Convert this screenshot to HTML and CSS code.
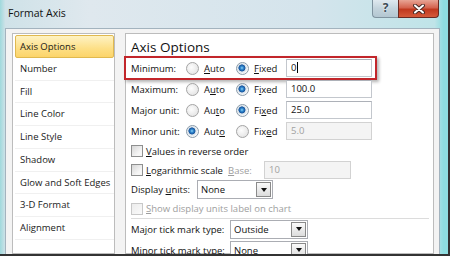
FILE: index.html
```html
<!DOCTYPE html>
<html lang="en">
<head>
    <meta charset="UTF-8">
    <meta name="viewport" content="width=device-width, initial-scale=1.0">
    <title>Format Axis</title>
    <link rel="stylesheet" href="styles.css">
</head>
<body>
    <div class="window">
        <div class="titlebar">
            <span class="title">Format Axis</span>
            <div class="caption">
                <span class="btn-help">?</span>
                <span class="btn-close">
                    <svg width="12" height="10" viewBox="0 0 12 10">
                        <path d="M2 1.5 L10 8.5 M10 1.5 L2 8.5" stroke="#4a2a26" stroke-width="4" stroke-linecap="round"/>
                        <path d="M2 1.5 L10 8.5 M10 1.5 L2 8.5" stroke="#fff" stroke-width="2" stroke-linecap="round"/>
                    </svg>
                </span>
            </div>
        </div>
        <div class="body">
            <ul class="nav">
                <li class="active">Axis Options</li>
                <li>Number</li>
                <li>Fill</li>
                <li>Line Color</li>
                <li>Line Style</li>
                <li>Shadow</li>
                <li>Glow and Soft Edges</li>
                <li>3-D Format</li>
                <li>Alignment</li>
            </ul>
            <div class="panel">
                <h2>Axis Options</h2>

                <div class="row highlight">
                    <span>Minimum:</span>
                    <span class="opt"><span class="radio"></span><span><u>A</u>uto</span></span>
                    <span class="opt"><span class="radio on"></span><span><u>F</u>ixed</span></span>
                    <span class="field">0<span class="caret"></span></span>
                </div>
                <div class="row">
                    <span>Maximum:</span>
                    <span class="opt"><span class="radio"></span><span>A<u>u</u>to</span></span>
                    <span class="opt"><span class="radio on"></span><span>F<u>i</u>xed</span></span>
                    <span class="field">100.0</span>
                </div>
                <div class="row">
                    <span>Major unit:</span>
                    <span class="opt"><span class="radio"></span><span>Au<u>t</u>o</span></span>
                    <span class="opt"><span class="radio on"></span><span>Fi<u>x</u>ed</span></span>
                    <span class="field">25.0</span>
                </div>
                <div class="row">
                    <span>Minor unit:</span>
                    <span class="opt"><span class="radio on"></span><span>Aut<u>o</u></span></span>
                    <span class="opt"><span class="radio"></span><span>Fix<u>e</u>d</span></span>
                    <span class="field off">5.0</span>
                </div>

                <div class="check">
                    <span class="box"></span><span><u>V</u>alues in reverse order</span>
                </div>
                <div class="check log">
                    <span class="check-label"><span class="box"></span><span><u>L</u>ogarithmic scale</span></span>
                    <span class="muted"><u>B</u>ase:</span>
                    <span class="field off">10</span>
                </div>
                <div class="select-row units">
                    <span>Display <u>u</u>nits:</span>
                    <span class="select">None<span class="arrow"></span></span>
                </div>
                <div class="check show">
                    <span class="box off"></span><span class="muted"><u>S</u>how display units label on chart</span>
                </div>

                <div class="sep"></div>

                <div class="select-row tick">
                    <span>Ma<u>j</u>or tick mark type:</span>
                    <span class="select">Outside<span class="arrow"></span></span>
                </div>
                <div class="select-row tick">
                    <span>M<u>i</u>nor tick mark type:</span>
                    <span class="select">None<span class="arrow"></span></span>
                </div>
            </div>
        </div>
    </div>
</body>
</html>
```

FILE: styles.css
```css
body {
    margin: 0;
    background: #fff;
    font-family: "Segoe UI", "Open Sans", sans-serif;
    font-size: 9.5px;
    color: #111;
    white-space: nowrap;
}
u {
    text-decoration-thickness: 1px;
    text-underline-offset: 1px;
}
.window {
    width: 450px;
    height: 256px;
    box-sizing: border-box;
    padding: 0 8px 0 5px;
    border-right: 2px solid #333;
    border-bottom: 2px solid #333;
    background: linear-gradient(90deg, #9fd9dc 0, #cfe2e8 1.2%, #dfe8ee 20%, #d4e4ec 70%, #bfe4e8 97%, #8edde0 99%);
    display: flex;
    flex-direction: column;
    overflow: hidden;
}
.titlebar {
    height: 28px;
    flex-shrink: 0;
    display: flex;
    align-items: flex-start;
    padding-left: 3px;
}
.title {
    margin-top: 6px;
    font-size: 10.5px;
    line-height: 14px;
    color: #111;
}
.caption {
    margin-left: auto;
    margin-right: 1px;
    display: flex;
}
.btn-help {
    width: 26px;
    height: 18px;
    box-sizing: border-box;
    border: 1px solid #7f939f;
    border-top: 0;
    border-right: 0;
    border-radius: 0 0 0 4px;
    background: linear-gradient(#dfe9ef, #c3d3dc 50%, #b3c7d1);
    color: #3c4a55;
    font-size: 12px;
    font-weight: bold;
    line-height: 16px;
    text-align: center;
    text-shadow: 0 0 2px #fff;
}
.btn-close {
    width: 41px;
    height: 18px;
    box-sizing: border-box;
    border: 1px solid #6a2a22;
    border-top: 0;
    border-radius: 0 0 4px 0;
    background: linear-gradient(#e8a595, #d4644f 45%, #c0391f 55%, #d55a3a);
    display: flex;
    align-items: center;
    justify-content: center;
}
.body {
    flex: 1;
    min-height: 0;
    display: flex;
    gap: 10px;
    padding: 4px 5px 0 6px;
    border: 1px solid #a3b3be;
    border-bottom: 0;
    background: #f3f3f3;
    overflow: hidden;
}
.nav {
    width: 103px;
    flex-shrink: 0;
    box-sizing: border-box;
    margin: 0;
    padding: 1px 0 0 2px;
    list-style: none;
    border: 1px solid #bcbcbc;
    background: #fff;
}
.nav li {
    height: 22.75px;
    box-sizing: border-box;
    padding-left: 5px;
    line-height: 21px;
    border-bottom: 1px solid #f0f0f0;
    color: #1a1a1a;
}
.nav li.active {
    padding-left: 4px;
    border: 1px solid #e0b94f;
    border-radius: 2px;
    background: linear-gradient(#fef2c4, #fddf86 60%, #fcd46a);
}
.panel {
    flex: 1;
    box-sizing: border-box;
    padding: 4px 0 0 5px;
    border: 1px solid #bcbcbc;
    background: #fff;
}
h2 {
    margin: 0;
    height: 19.5px;
    font-size: 13.5px;
    font-weight: normal;
    line-height: 19.5px;
    color: #111;
}
.row {
    position: relative;
    height: 21px;
    display: grid;
    grid-template-columns: 55px 50px 50px 86px;
    align-items: center;
}
.highlight::after {
    content: "";
    position: absolute;
    left: -7px;
    top: -1.5px;
    width: 253px;
    height: 24px;
    box-sizing: border-box;
    border: 2px solid #c2262b;
    box-shadow: 2px 2px 3px rgba(0, 0, 0, 0.3);
}
.opt {
    display: flex;
    align-items: center;
    gap: 5px;
}
.radio {
    width: 13px;
    height: 13px;
    flex-shrink: 0;
    box-sizing: border-box;
    border-radius: 50%;
    border: 1px solid #a4a4a4;
    background: radial-gradient(circle at 40% 40%, #fdfdfd, #dedede);
}
.radio.on {
    border-color: #8a9aa8;
    background: radial-gradient(circle at 45% 45%, #8fd3f7 0, #2f86cc 1.6px, #16519a 3.2px, #d8e2ea 3.8px, #fafafa 6px);
}
.field {
    height: 18px;
    box-sizing: border-box;
    padding-left: 4px;
    border: 1px solid #c3c7cd;
    border-top-color: #adb1b8;
    background: #fff;
    line-height: 16px;
}
.field.off {
    background: #f4f4f4;
    border-color: #d2d2d2;
    color: #a2a2a2;
}
.caret {
    display: inline-block;
    width: 1px;
    height: 11px;
    margin-left: 1px;
    vertical-align: -2px;
    background: #000;
}
.check {
    height: 19px;
    display: flex;
    align-items: center;
}
.check.show {
    height: 18px;
}
.box {
    width: 12px;
    height: 12px;
    flex-shrink: 0;
    box-sizing: border-box;
    margin-right: 3px;
    border: 1px solid #8e8f8f;
    background: linear-gradient(135deg, #d6d6d6, #f6f6f6 70%);
}
.box.off {
    border-color: #c8c8c8;
    background: linear-gradient(135deg, #ececec, #fafafa);
}
.muted {
    color: #9e9e9e;
}
.log {
    display: grid;
    grid-template-columns: 97px 36px 87px;
}
.check-label {
    display: flex;
    align-items: center;
}
.select-row {
    display: grid;
    align-items: center;
}
.units {
    height: 20px;
    grid-template-columns: 66px 76px;
}
.tick {
    height: 21px;
    grid-template-columns: 99px 78px;
}
.select {
    height: 19px;
    box-sizing: border-box;
    padding-left: 3px;
    border: 1px solid #abadb3;
    background: #fff;
    display: flex;
    align-items: center;
}
.arrow {
    width: 15px;
    height: 15px;
    box-sizing: border-box;
    margin-left: auto;
    margin-right: 1px;
    border: 1px solid #8a8a8a;
    background: linear-gradient(#fafafa, #dcdcdc);
    display: flex;
    align-items: center;
    justify-content: center;
}
.arrow::before {
    content: "";
    border-left: 3.5px solid transparent;
    border-right: 3.5px solid transparent;
    border-top: 4px solid #111;
}
.sep {
    height: 1px;
    margin: 0 4px 0 0;
    background: #dcdcdc;
}
```
